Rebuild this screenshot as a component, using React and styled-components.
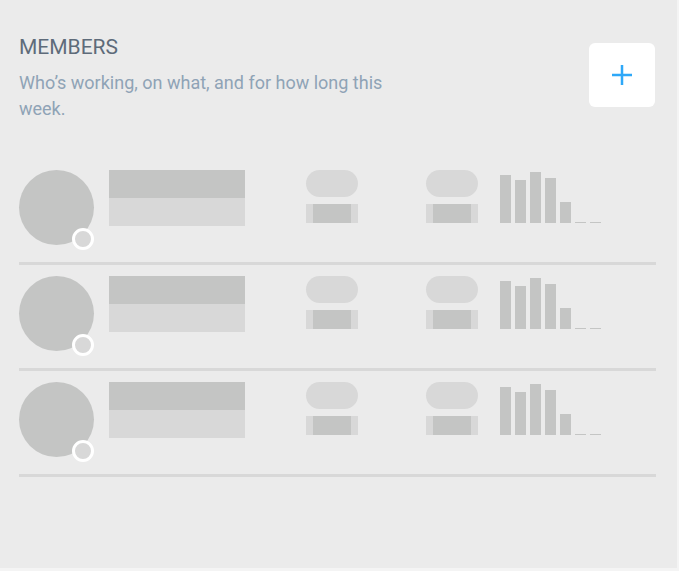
import React from 'react';
import styled, { createGlobalStyle } from 'styled-components';

const panelColor = '#EBEBEB';
const darkBlock = '#C4C5C4';
const lightBlock = '#D8D8D8';

const GlobalStyle = createGlobalStyle`
    body {
        margin: 0;
        background: #F4F4F4;
        font-family: Roboto, "Liberation Sans", sans-serif;
    }
`;

const Panel = styled.div`
    width: 677px;
    height: 568px;
    box-sizing: border-box;
    padding: 35px 21px 0 19px;
    background: ${panelColor};
`;

const Header = styled.div`
    display: flex;
    justify-content: space-between;
    align-items: flex-start;
    margin-bottom: 48px;
`;

const Title = styled.h2`
    margin: 0;
    font-size: 21px;
    font-weight: 400;
    line-height: 24px;
    color: #5E6B7A;
`;

const Subtitle = styled.p`
    margin: 11px 0 0;
    max-width: 385px;
    font-size: 18px;
    line-height: 26px;
    color: #8FA3B6;
`;

const AddButton = styled.button`
    display: flex;
    align-items: center;
    justify-content: center;
    width: 66px;
    height: 64px;
    margin-top: 8px;
    margin-right: 1px;
    padding: 0;
    border: none;
    border-radius: 6px;
    background: #FFFFFF;
    cursor: pointer;
`;

const Row = styled.div`
    display: grid;
    grid-template-columns: 90px 197px 120px 74px auto;
    align-items: start;
    padding-bottom: 17px;
    border-bottom: 3px solid ${lightBlock};
    & + & {
        margin-top: 11px;
    }
`;

const Avatar = styled.div`
    position: relative;
    width: 75px;
    height: 75px;
    border-radius: 50%;
    background: ${darkBlock};
`;

const Status = styled.span`
    position: absolute;
    right: 0;
    bottom: -5px;
    width: 16px;
    height: 16px;
    border: 3px solid #FFFFFF;
    border-radius: 50%;
    background: ${lightBlock};
`;

const NameBlock = styled.div`
    display: flex;
    flex-direction: column;
    width: 136px;
`;

const NameLine = styled.div`
    height: 28px;
    background: ${(p) => (p.$dark ? darkBlock : lightBlock)};
`;

const Stat = styled.div`
    display: flex;
    flex-direction: column;
    gap: 7px;
    width: 52px;
`;

const Pill = styled.div`
    height: 27px;
    border-radius: 14px;
    background: ${lightBlock};
`;

const StatBar = styled.div`
    height: 19px;
    padding: 0 7px;
    background: ${lightBlock};
    &::before {
        content: '';
        display: block;
        height: 100%;
        background: ${darkBlock};
    }
`;

const Chart = styled.div`
    display: flex;
    align-items: flex-end;
    gap: 4px;
    height: 53px;
`;

const Bar = styled.div`
    width: 11px;
    background: ${darkBlock};
`;

const PlusIcon = () => (
    <svg width="22" height="22" viewBox="0 0 22 22">
        <path d="M11 1v20M1 11h20" stroke="#2EA8F8" strokeWidth="2.5" fill="none" />
    </svg>
);

const week = [48, 43, 51, 45, 21, 1.5, 1.5];

const MemberRow = () => (
    <Row>
        <Avatar>
            <Status />
        </Avatar>
        <NameBlock>
            <NameLine $dark />
            <NameLine />
        </NameBlock>
        <Stat>
            <Pill />
            <StatBar />
        </Stat>
        <Stat>
            <Pill />
            <StatBar />
        </Stat>
        <Chart>
            {week.map((h, i) => (
                <Bar key={i} style={{ height: h }} />
            ))}
        </Chart>
    </Row>
);

const App = () => (
    <>
        <GlobalStyle />
        <Panel>
            <Header>
                <div>
                    <Title>MEMBERS</Title>
                    <Subtitle>Who’s working, on what, and for how long this week.</Subtitle>
                </div>
                <AddButton aria-label="Add member">
                    <PlusIcon />
                </AddButton>
            </Header>
            <MemberRow />
            <MemberRow />
            <MemberRow />
        </Panel>
    </>
);

export default App;
